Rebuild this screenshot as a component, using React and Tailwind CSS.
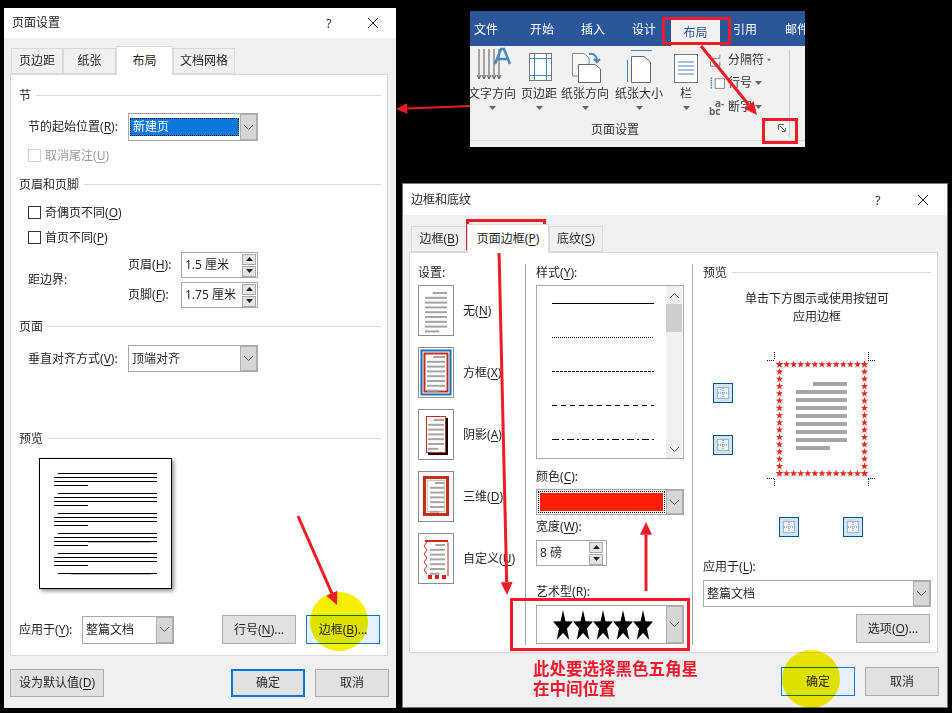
import React from "react";

const Key = ({ t, k, colon }) => (
  <span className="whitespace-nowrap">
    {t}(<span className="underline underline-offset-2">{k}</span>){colon ? ":" : ""}
  </span>
);

const Chevron = ({ up }) => (
  <svg width="11" height="7" viewBox="0 0 11 7">
    <polyline points={up ? "1,6 5.5,1.5 10,6" : "1,1 5.5,5.5 10,1"} fill="none" stroke="#555" strokeWidth="1" />
  </svg>
);

const Heading = ({ children, className = "" }) => (
  <div className={`flex items-center gap-[5px] h-[16px] ${className}`}>
    <span className="whitespace-nowrap pt-[2px]">{children}</span>
    <div className="flex-1 h-px bg-[#dadada]" />
  </div>
);

const Combo = ({ className, children, btn = "w-[17px]" }) => (
  <div className={`flex border border-[#a8a8a8] bg-white ${className}`}>
    <div className="flex-1 min-w-0 flex items-center overflow-hidden">{children}</div>
    <div className={`${btn} bg-[#d6d6d6] border border-[#b0b0b0] flex items-center justify-center`}>
      <Chevron />
    </div>
  </div>
);

const Tri = ({ up }) => (
  <svg width="7" height="4" viewBox="0 0 7 4">
    <polygon points={up ? "3.5,0 7,4 0,4" : "0,0 7,0 3.5,4"} fill="#222" />
  </svg>
);

const Spin = ({ className, children }) => (
  <div className={`flex items-center border border-[#a8a8a8] bg-white pl-[3px] pr-[1px] ${className}`}>
    <span className="flex-1 whitespace-nowrap">{children}</span>
    <div className="flex flex-col gap-px">
      <div className="w-[14px] h-[11px] bg-[#e4e4e4] border border-[#a8a8a8] flex items-center justify-center"><Tri up /></div>
      <div className="w-[14px] h-[11px] bg-[#e4e4e4] border border-[#a8a8a8] flex items-center justify-center"><Tri /></div>
    </div>
  </div>
);

const Btn = ({ className = "", children }) => (
  <div className={`w-[74px] flex items-center justify-center border border-[#adadad] bg-[#e1e1e1] whitespace-nowrap ${className}`}>{children}</div>
);

const Tab = ({ w, active, children }) => (
  <div
    className={`${w} flex items-center justify-center border border-[#d9d9d9] whitespace-nowrap ${
      active ? "h-[29px] bg-white border-b-0 -mb-px z-10" : "h-[26px] bg-[#f0f0f0]"
    }`}
  >
    {children}
  </div>
);

const Title = ({ text, qx, xx }) => (
  <div className="flex items-center bg-white px-[8px] h-full">
    <span>{text}</span>
    <span className={`${qx} text-[13px] text-[#333]`}>?</span>
    <svg className={xx} width="12" height="12" viewBox="0 0 12 12">
      <path d="M1 1L11 11M11 1L1 11" stroke="#222" strokeWidth="1" />
    </svg>
  </div>
);

const Check = ({ disabled, label }) => (
  <div className={`flex items-center gap-[4px] ${disabled ? "text-[#9a9a9a]" : ""}`}>
    <div className={`w-[13px] h-[13px] border bg-white ${disabled ? "border-[#cfcfcf]" : "border-[#333]"}`} />
    {label}
  </div>
);

function DocPreview() {
  const groups = [0, 20, 40, 60, 80];
  return (
    <svg width="131" height="129" viewBox="0 0 131 129" className="block">
      {groups.map((g) => (
        <g key={g} stroke="#000" strokeWidth="1">
          <line x1="18" x2="117" y1={g + 14.5} y2={g + 14.5} />
          <line x1="14" x2="117" y1={g + 18.5} y2={g + 18.5} />
          <line x1="14" x2="117" y1={g + 22.5} y2={g + 22.5} />
          <line x1="14" x2="48" y1={g + 26.5} y2={g + 26.5} />
        </g>
      ))}
      <line x1="48" x2="111" y1="83.5" y2="83.5" stroke="#bbb" />
      <line x1="18" x2="117" y1="114.5" y2="114.5" stroke="#000" />
      <line x1="31" x2="111" y1="115.5" y2="115.5" stroke="#bbb" />
    </svg>
  );
}

function TextBars({ x1, x2, y, n, step = 4.8, h = 2 }) {
  return Array.from({ length: n }).map((_, i) => {
    const short1 = i === 0;
    const short2 = i === n - 1;
    const w = x2 - x1;
    const sx = short1 ? x1 + w * 0.35 : x1;
    const ex = short2 ? x2 - w * 0.35 : x2;
    return <rect key={i} x={sx} y={y + i * step} width={ex - sx} height={h} fill="#a6a6a6" />;
  });
}

function Thumb({ kind }) {
  const R = "#c0301f";
  return (
    <div className="w-[36px] h-[51px] border border-[#8c8c8c] bg-white">
      <svg width="34" height="49" viewBox="0 0 34 49" className="block">
        {kind === "none" && <TextBars x1={6} x2={28} y={6} n={9} />}
        {kind === "box" && (
          <>
            <rect x="2.5" y="2.5" width="29" height="44" fill="none" stroke="#1b6fb3" strokeWidth="2" />
            <rect x="5.5" y="5.5" width="23" height="38" fill="none" stroke={R} strokeWidth="2" />
            <TextBars x1={8} x2={26} y={8} n={8} />
          </>
        )}
        {kind === "shadow" && (
          <>
            <rect x="7.5" y="6.5" width="19" height="36" fill="none" stroke={R} strokeWidth="1" />
            <path d="M28 8V44H9" fill="none" stroke="#000" strokeWidth="2" />
            <TextBars x1={9} x2={25} y={9} n={7} />
          </>
        )}
        {kind === "3d" && (
          <>
            <rect x="5.5" y="5.5" width="23" height="37" fill="none" stroke={R} strokeWidth="3" />
            <rect x="8.5" y="8.5" width="17" height="31" fill="#fff" stroke="#e8b8a8" strokeWidth="1" />
            <TextBars x1={11} x2={25} y={10} n={7} />
          </>
        )}
        {kind === "custom" && (
          <>
            <path d="M6 7H29" stroke="#d8241a" strokeWidth="2" />
            <path d="M8 8L5 12L8 16L5 20L8 24L5 28L8 32L5 36L8 40" fill="none" stroke={R} strokeWidth="1" />
            <path d="M29 8V42" stroke={R} strokeWidth="1" />
            <rect x="9" y="41" width="4" height="4" fill="#d8241a" />
            <rect x="16" y="41" width="4" height="4" fill="#d8241a" />
            <rect x="23" y="41" width="4" height="4" fill="#d8241a" />
            <TextBars x1={11} x2={26} y={10} n={7} />
          </>
        )}
      </svg>
    </div>
  );
}

const starPts = (cx, cy, rx, ry = rx) => {
  const p = [];
  for (let i = 0; i < 10; i++) {
    const k = i % 2 === 0 ? 1 : 0.4;
    const a = -Math.PI / 2 + (i * Math.PI) / 5;
    p.push(`${(cx + rx * k * Math.cos(a)).toFixed(2)},${(cy + ry * k * Math.sin(a)).toFixed(2)}`);
  }
  return p.join(" ");
};

function BorderIconBtn() {
  return (
    <div className="w-[20px] h-[20px] border border-[#0b4f86] bg-[#cce4f7] flex items-center justify-center">
      <svg width="14" height="14" viewBox="0 0 14 14">
        <rect x="1.5" y="1.5" width="11" height="11" fill="#e9f3fb" stroke="#777" strokeDasharray="1 1" />
        <path d="M7 2V12M2 7H12" stroke="#777" strokeDasharray="1 1" />
      </svg>
    </div>
  );
}

function StarPage() {
  const xs = Array.from({ length: 13 }, (_, i) => 3.5 + i * 7.083);
  const ys = Array.from({ length: 16 }, (_, i) => 3.5 + i * 7.267);
  const r = 3.8;
  return (
    <svg width="110" height="134" viewBox="-9 -9 110 134" className="block">
      <g fill="#e8281a">
        {xs.map((x) => (
          <polygon key={`t${x}`} points={starPts(x, 3.5, r)} />
        ))}
        {xs.map((x) => (
          <polygon key={`b${x}`} points={starPts(x, 112.5, r)} />
        ))}
        {ys.map((y) => (
          <polygon key={`l${y}`} points={starPts(3.5, y, r)} />
        ))}
        {ys.map((y) => (
          <polygon key={`r${y}`} points={starPts(88.5, y, r)} />
        ))}
      </g>
      <g stroke="#111" strokeDasharray="1 1" fill="none">
        <path d="M-9 -0.5H-1M-1.5 -9V-1M92 -0.5H100M92.5 -9V-1M-9 117.5H-1M-1.5 118V125M92 117.5H100M92.5 118V125" />
      </g>
      {[23, 31, 39, 47, 55, 63, 71, 79, 87].map((y, i) => (
        <rect key={y} x={i === 0 ? 37 : 20} y={y - 2} width={i === 0 ? 34 : i === 8 ? 34 : 51} height="4" fill="#a6a6a6" />
      ))}
    </svg>
  );
}

const Caret = () => (
  <svg width="7" height="4" viewBox="0 0 7 4"><polygon points="0,0 7,0 3.5,4" fill="#666" /></svg>
);

function RibbonBtn({ w, ml, label, children }) {
  return (
    <div className={`${w} ${ml} flex flex-col items-center shrink-0`}>
      <div className="h-[40px] flex items-end justify-center">{children}</div>
      <div className="h-[16px] leading-[16px] whitespace-nowrap">{label}</div>
      <div className="mt-[4px] flex"><Caret /></div>
    </div>
  );
}

function RibTab({ ml, children }) {
  return <span className={`${ml} mb-[8px] shrink-0 whitespace-nowrap`}>{children}</span>;
}

function Ribbon() {
  const B = "#4a86b8";
  return (
    <div className="absolute left-[470px] top-[11px] w-[335px] h-[136px] overflow-hidden bg-[#f1f1f1] text-[#333] flex flex-col">
      <div className="h-[35px] bg-[#2b579a] flex items-end text-white shrink-0">
        <RibTab ml="ml-[4px]">文件</RibTab>
        <RibTab ml="ml-[32px]">开始</RibTab>
        <RibTab ml="ml-[27px]">插入</RibTab>
        <RibTab ml="ml-[27px]">设计</RibTab>
        <div className="ml-[15px] w-[49px] h-[27px] shrink-0 bg-[#f1f1f1] text-[#2b579a] flex items-center justify-center">布局</div>
        <RibTab ml="ml-[13px]">引用</RibTab>
        <RibTab ml="ml-[28px]">邮件</RibTab>
      </div>
      <div className="flex h-[75px] shrink-0">
        <RibbonBtn w="w-[44px]" label="文字方向">
          <svg width="40" height="40" viewBox="0 0 40 40">
            <path d="M7 3V32M12 3V32M17 3V32M22 3V32M27 3V32" stroke="#555" />
            <path d="M5 29L7 33L9 29M10 29L12 33L14 29M15 29L17 33L19 29M20 29L22 33L24 29M25 29L27 33L29 29" stroke="#555" fill="none" />
            <path d="M23 18L29 3H32L38 18M25 13H36" fill="none" stroke={B} strokeWidth="2.5" />
          </svg>
        </RibbonBtn>
        <RibbonBtn w="w-[36px]" ml="ml-[7px]" label="页边距">
          <svg width="28" height="36" viewBox="0 0 28 36">
            <rect x="4.5" y="3.5" width="22" height="27" fill="#fff" stroke="#777" />
            <path d="M9.5 4V30M21.5 4V30M5 8.5H26M5 25.5H26" stroke={B} />
          </svg>
        </RibbonBtn>
        <RibbonBtn w="w-[46px]" ml="ml-[5px]" label="纸张方向">
          <svg width="34" height="38" viewBox="0 0 34 38">
            <path d="M4.5 5.5H16L21 10V28H4.5Z" fill="#f7f7f7" stroke="#888" />
            <path d="M10.5 16.5H27L32.5 21V34.5H10.5Z" fill="#fff" stroke="#666" />
            <path d="M21 6C26 5 29 8 29 13M26 11L29 14L32 11" fill="none" stroke={B} strokeWidth="2" />
          </svg>
        </RibbonBtn>
        <RibbonBtn w="w-[48px]" ml="ml-[7px]" label="纸张大小">
          <svg width="30" height="38" viewBox="0 0 30 38">
            <path d="M7 2.5H28M3.5 12V34" stroke={B} />
            <path d="M7.5 8.5H20L26.5 14V34.5H7.5Z" fill="#fff" stroke="#666" />
          </svg>
        </RibbonBtn>
        <RibbonBtn w="w-[24px]" ml="ml-[11px]" label="栏">
          <svg width="24" height="34" viewBox="0 0 24 34">
            <rect x="0.5" y="2.5" width="23" height="28" fill="#fff" stroke="#777" />
            <path d="M4 10H20M4 14H20M4 18H20M4 22H20" stroke={B} />
          </svg>
        </RibbonBtn>
        <div className="ml-[11px] flex flex-col w-[62px] shrink-0 pt-[2px]">
          {[
            ["分隔符", "M2 3V8H14V3M2 12V18H14V12"],
            ["行号", "M8 4.5H20V17H8Z"],
            ["断字", ""],
          ].map(([t, d], i) => (
            <div key={t} className="h-[23.5px] flex items-center gap-[3px]">
              {i < 2 ? (
                <svg width="17" height="20" viewBox="0 0 22 20" className="shrink-0">
                  <path d={d} fill={i === 1 ? "#fff" : "none"} stroke="#666" />
                  {i === 1 && <path d="M3 3V18" stroke={B} strokeWidth="2" strokeDasharray="2 1" />}
                </svg>
              ) : (
                <span className="w-[17px] shrink-0 flex flex-col text-[10px] leading-[8px] font-bold text-[#666]">
                  <span className="pl-[6px]">a-</span>
                  <span>bc</span>
                </span>
              )}
              <span className="whitespace-nowrap ml-[-1px]">{t}</span>
              <Caret />
            </div>
          ))}
        </div>
      </div>
      <div className="flex h-[19px] shrink-0 relative">
        <div className="w-[290px] text-center leading-[18px]">页面设置</div>
        <svg width="8" height="8" viewBox="0 0 8 8" className="absolute left-[308px] top-[3px]">
          <path d="M0.5 6V0.5H6M2 2L7 7M4 7.5H7.5V4" fill="none" stroke="#666" />
        </svg>
      </div>
      <div className="h-px bg-[#d8d8d8]" />
      <div className="absolute left-[319px] top-[39px] w-px h-[87px] bg-[#c8c8c8]" />
    </div>
  );
}

function LeftDialog() {
  return (
    <div className="absolute left-[4px] top-[8px] w-[392px] h-[700px] bg-[#f0f0f0] flex flex-col">
      <div className="h-[30px] shrink-0">
        <Title text="页面设置" qx="ml-[266px]" xx="ml-[35px]" />
      </div>
      <div className="h-[36px] pl-[7px] flex items-end shrink-0">
        <Tab w="w-[52px]">页边距</Tab>
        <Tab w="w-[53px]">纸张</Tab>
        <Tab w="w-[57px]" active>布局</Tab>
        <Tab w="w-[62px]">文档网格</Tab>
      </div>
      <div className="ml-[6px] w-[378px] h-[582px] border border-[#d9d9d9] bg-white pl-[8px] pr-[6px] pt-[12px] flex flex-col shrink-0">
        <Heading>节</Heading>
        <div className="mt-[10px] ml-[9px] flex items-center h-[28px]">
          <div className="w-[100px]"><Key t="节的起始位置" k="R" colon /></div>
          <Combo className="w-[130px] h-[28px]">
            <div className="mx-[1px] w-[109px] h-[18px] bg-[#0a78dc] text-white border border-dotted border-[#111] flex items-center pl-[2px]">新建页</div>
          </Combo>
        </div>
        <div className="mt-[8px] ml-[9px] h-[13px] flex items-center">
          <Check disabled label={<Key t="取消尾注" k="U" />} />
        </div>
        <Heading className="mt-[14px]">页眉和页脚</Heading>
        <div className="mt-[14px] ml-[9px] h-[13px] flex items-center"><Check label={<Key t="奇偶页不同" k="O" />} /></div>
        <div className="mt-[12px] ml-[9px] h-[13px] flex items-center"><Check label={<Key t="首页不同" k="P" />} /></div>
        <div className="mt-[8px] ml-[9px] flex items-center">
          <div className="w-[100px]">距边界:</div>
          <div className="flex flex-col gap-[4px]">
            <div className="flex items-center h-[26px]">
              <div className="w-[53px]"><Key t="页眉" k="H" colon /></div>
              <Spin className="w-[77px] h-[26px]">1.5 厘米</Spin>
            </div>
            <div className="flex items-center h-[26px]">
              <div className="w-[53px]"><Key t="页脚" k="F" colon /></div>
              <Spin className="w-[77px] h-[26px]">1.75 厘米</Spin>
            </div>
          </div>
        </div>
        <Heading className="mt-[10px]">页面</Heading>
        <div className="mt-[11px] ml-[9px] flex items-center h-[27px]">
          <div className="w-[100px]"><Key t="垂直对齐方式" k="V" colon /></div>
          <Combo className="w-[130px] h-[27px]"><span className="pl-[3px]">顶端对齐</span></Combo>
        </div>
        <Heading className="mt-[58px]">预览</Heading>
        <div className="mt-[12px] ml-[20px] w-[133px] h-[131px] border border-black bg-white shadow-[2px_2px_4px_rgba(0,0,0,0.45)]">
          <DocPreview />
        </div>
        <div className="mt-[26px] flex items-center h-[29px] pr-[1px]">
          <div className="w-[63px]"><Key t="应用于" k="Y" colon /></div>
          <Combo className="w-[92px] h-[28px]"><span className="pl-[3px]">整篇文档</span></Combo>
          <Btn className="h-[29px] ml-auto"><Key t="行号" k="N" />...</Btn>
          <Btn className="h-[29px] ml-[10px] !border-[#0078d7] !bg-[#e5f1fb]"><Key t="边框" k="B" />...</Btn>
        </div>
      </div>
      <div className="mt-[13px] ml-[6px] mr-[7px] h-[28px] flex">
        <Btn className="!w-[94px]"><Key t="设为默认值" k="D" /></Btn>
        <Btn className="ml-auto border-2 !border-[#0078d7]">确定</Btn>
        <Btn className="ml-[10px]">取消</Btn>
      </div>
    </div>
  );
}

function StyleLine({ dash }) {
  return (
    <div className="h-[34px] flex items-center pl-[15px]">
      <svg width="102" height="1" className="block">
        <line x1="0" x2="102" y1="0.5" y2="0.5" stroke="#000" strokeDasharray={dash} />
      </svg>
    </div>
  );
}

function RightDialog() {
  const thumbs = [
    ["none", <Key t="无" k="N" />],
    ["box", <Key t="方框" k="X" />],
    ["shadow", <Key t="阴影" k="A" />],
    ["3d", <Key t="三维" k="D" />],
    ["custom", <Key t="自定义" k="U" />],
  ];
  return (
    <div className="absolute left-[403px] top-[184px] w-[544px] h-[523px] bg-[#f0f0f0] flex flex-col shadow-[0_0_0_1px_#777]">
      <div className="h-[31px] shrink-0">
        <Title text="边框和底纹" qx="ml-[404px]" xx="ml-[36px]" />
      </div>
      <div className="h-[37px] pl-[8px] flex items-end shrink-0">
        <Tab w="w-[56px]"><Key t="边框" k="B" /></Tab>
        <Tab w="w-[82px]" active><Key t="页面边框" k="P" /></Tab>
        <Tab w="w-[54px]"><Key t="底纹" k="S" /></Tab>
      </div>
      <div className="ml-[6px] w-[529px] h-[401px] border border-[#d9d9d9] bg-white pt-[11px] flex shrink-0">
        <div className="w-[116px] h-[381px] border-r border-[#a6a6a6] pl-[8px] shrink-0">
          <div className="h-[16px] mt-px">设置:</div>
          <div className="mt-[4px] flex flex-col gap-[11px]">
            {thumbs.map(([k, l]) => (
              <div key={k} className="flex items-center gap-[9px]">
                <Thumb kind={k} />
                {l}
              </div>
            ))}
          </div>
        </div>
        <div className="w-[167px] h-[381px] border-r border-[#a6a6a6] pl-[10px] pr-[8px] shrink-0 flex flex-col">
          <div className="h-[16px] mt-px"><Key t="样式" k="Y" colon /></div>
          <div className="mt-[4px] h-[174px] border border-[#a8a8a8] flex bg-white shrink-0">
            <div className="flex-1">
              <StyleLine />
              <StyleLine dash="1 1" />
              <StyleLine dash="3 1" />
              <StyleLine dash="5 4" />
              <StyleLine dash="7 3 2 3" />
            </div>
            <div className="w-[16px] mr-px bg-[#f0f0f0] flex flex-col items-center">
              <div className="h-[18px] flex items-center"><Chevron up /></div>
              <div className="w-full h-[28px] bg-[#cdcdcd]" />
              <div className="mt-auto h-[18px] flex items-center"><Chevron /></div>
            </div>
          </div>
          <div className="mt-[10px] h-[16px]"><Key t="颜色" k="C" colon /></div>
          <Combo className="mt-[4px] h-[26px] shrink-0">
            <div className="ml-[1px] w-[127px] h-[22px] border border-dotted border-black p-[1px]">
              <div className="w-full h-full bg-[#ff1e00]" />
            </div>
          </Combo>
          <div className="mt-[4px] h-[16px]"><Key t="宽度" k="W" colon /></div>
          <Spin className="mt-[5px] w-[71px] h-[26px] shrink-0 pr-[3px] pl-[2px]">8 磅</Spin>
          <div className="mt-[18px] h-[16px]"><Key t="艺术型" k="R" colon /></div>
          <Combo className="mt-[5px] h-[39px] shrink-0">
            <svg width="128" height="37" viewBox="0 0 128 37" className="block">
              {[26, 46, 66, 86, 106].map((x) => (
                <polygon key={x} points={starPts(x, 20.5, 10.5, 16.5)} fill="#000" />
              ))}
            </svg>
          </Combo>
        </div>
        <div className="w-[238px] pl-[10px] shrink-0 flex flex-col">
          <Heading>预览</Heading>
          <div className="mt-[10px] w-[228px] text-center leading-[18px]">
            单击下方图示或使用按钮可<br />应用边框
          </div>
          <div className="relative mt-[18px] w-[228px] h-[200px] shrink-0">
            <div className="absolute left-[10px] top-[39px]"><BorderIconBtn /></div>
            <div className="absolute left-[10px] top-[91px]"><BorderIconBtn /></div>
            <div className="absolute left-[76px] top-[173px]"><BorderIconBtn /></div>
            <div className="absolute left-[140px] top-[173px]"><BorderIconBtn /></div>
            <div className="absolute left-[64px] top-[8px]"><StarPage /></div>
          </div>
          <div className="mt-[15px] h-[16px]"><Key t="应用于" k="L" colon /></div>
          <Combo className="mt-[5px] w-[228px] h-[27px] shrink-0"><span className="pl-[3px]">整篇文档</span></Combo>
          <div className="mt-[7px] w-[227px] flex justify-end">
            <Btn className="h-[29px]"><Key t="选项" k="O" />...</Btn>
          </div>
        </div>
      </div>
      <div className="mt-[14px] pr-[8px] flex justify-end h-[29px]">
        <Btn className="!border-[#0078d7] !bg-[#e5f1fb]">确定</Btn>
        <Btn className="ml-[10px]">取消</Btn>
      </div>
    </div>
  );
}

function Arrow({ x1, y1, x2, y2, w = 3, head = 8 }) {
  const a = Math.atan2(y2 - y1, x2 - x1);
  const bx = x2 - Math.cos(a) * head * 1.6;
  const by = y2 - Math.sin(a) * head * 1.6;
  const nx = -Math.sin(a) * head * 0.75;
  const ny = Math.cos(a) * head * 0.75;
  return (
    <g>
      <line x1={x1} y1={y1} x2={bx} y2={by} stroke="#ee1c25" strokeWidth={w} />
      <polygon points={`${x2},${y2} ${bx + nx},${by + ny} ${bx - nx},${by - ny}`} fill="#ee1c25" />
    </g>
  );
}

export default function App() {
  return (
    <div className="relative w-[952px] h-[713px] bg-black overflow-hidden text-[12px] leading-[16px] text-[#262626] [font-family:'Noto_Sans','Noto_Sans_CJK_SC',sans-serif]">
      <LeftDialog />
      <Ribbon />
      <RightDialog />

      <div className="absolute left-[310px] top-[592px] w-[58px] h-[59px] rounded-full bg-[#f7ef00] mix-blend-multiply" />
      <div className="absolute left-[782px] top-[650px] w-[58px] h-[58px] rounded-full bg-[#f7ef00] mix-blend-multiply" />

      <div className="absolute left-[662px] top-[17px] w-[69px] h-[28px] border-[3px] border-[#ee1c25]" />
      <div className="absolute left-[762px] top-[118px] w-[36px] h-[26px] border-[3px] border-[#ee1c25]" />
      <div className="absolute left-[466px] top-[219px] w-[80px] h-[31px] border-[3px] border-[#ee1c25]" />
      <div className="absolute left-[510px] top-[598px] w-[180px] h-[53px] border-[3px] border-[#ee1c25]" />

      <svg className="absolute left-0 top-0 pointer-events-none" width="952" height="713" viewBox="0 0 952 713">
        <Arrow x1={470} y1={106} x2={396} y2={109} w={2} head={7} />
        <Arrow x1={701} y1={46} x2={757} y2={115} w={3} />
        <Arrow x1={298} y1={516} x2={337} y2={605} w={3} />
        <Arrow x1={499} y1={250} x2={507} y2={595} w={3} />
        <Arrow x1={646} y1={591} x2={646} y2={522} w={3} />
      </svg>

      <div className="absolute left-[533px] top-[658px] text-[16.5px] leading-[20px] font-bold text-[#f5172b] whitespace-nowrap [font-family:'Noto_Sans_CJK_SC',sans-serif]">
        此处要选择黑色五角星<br />在中间位置
      </div>
    </div>
  );
}
